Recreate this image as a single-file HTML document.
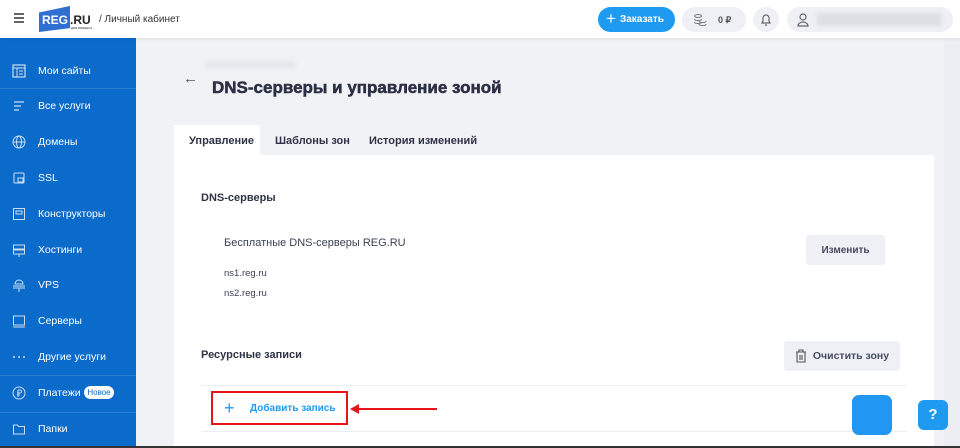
<!DOCTYPE html>
<html><head><meta charset="utf-8"><style>
*{box-sizing:border-box;margin:0;padding:0}
html,body{width:960px;height:448px;overflow:hidden}
body{font-family:"Liberation Sans",sans-serif;background:#f1f2f6;position:relative;color:#2f3347}
.hdr{position:absolute;left:0;top:0;width:960px;height:38px;background:#fff;box-shadow:0 1px 3px rgba(0,0,0,.08);z-index:2}
.side{position:absolute;left:0;top:38px;width:136px;height:410px;background:#0b6bcb;color:#fff;font-size:10.5px}
.it{position:absolute;left:0;width:136px;height:20px;display:flex;align-items:center}
.it svg{position:absolute;left:12px;width:14px;height:14px}
.it span{position:absolute;left:38px}
.dv{position:absolute;left:0;width:136px;height:1px;background:rgba(255,255,255,.12)}
.pill{border-radius:14px;background:#eef0f5;position:absolute;top:7px;height:25px}
.card{position:absolute;left:174px;top:155px;width:760px;height:300px;background:#fff}
.t{position:absolute;font-size:11px;font-weight:bold;top:135px}
.btn{position:absolute;background:#eef0f5;border-radius:3px;font-size:10px;font-weight:bold;color:#464c60;display:flex;align-items:center;justify-content:center}
</style></head><body>
<div class="hdr">
 <div style="position:absolute;left:14px;top:13px;width:10px;height:2px;background:#666;box-shadow:0 4px 0 #666,0 8px 0 #666"></div>
 <div style="position:absolute;left:39px;top:6px;width:31px;height:26px;background:#2f6fd0;clip-path:polygon(0 25%,100% 0,100% 85%,0 100%)"></div>
 <div style="position:absolute;left:42px;top:13px;font-size:12px;font-weight:bold;color:#fff">REG</div>
 <div style="position:absolute;left:70px;top:13px;font-size:12px;font-weight:bold;color:#222">.RU</div>
 <div style="position:absolute;left:71px;top:26px;font-size:3px;color:#222">ДЛЯ БИЗНЕСА</div>
 <div style="position:absolute;left:99px;top:14px;font-size:10px;color:#333">/ Личный кабинет</div>
 <div style="position:absolute;left:598px;top:7px;width:77px;height:25px;border-radius:13px;background:#1e9bf0;color:#fff;font-size:10px;font-weight:bold;display:flex;align-items:center;padding-left:8px"><span style="font-size:17px;font-weight:normal;margin-right:4px;margin-top:-2px">+</span>Заказать</div>
 <div class="pill" style="left:682px;width:64px;font-size:9px;font-weight:bold;color:#555"><svg width="14" height="14" style="position:absolute;left:11px;top:6px"><ellipse cx="5" cy="3" rx="3.5" ry="1.5" fill="none" stroke="#777"/><path d="M1.5 6c0 2 7 2 7 0M1.5 9c0 2 7 2 7 0M6 11c0 2 7 2 7 0M6 8c0 2 7 2 7 0" fill="none" stroke="#777"/></svg><span style="position:absolute;left:36px;top:8px">0 ₽</span></div>
 <div class="pill" style="left:753px;width:26px;border-radius:50%"><svg width="26" height="25"><path d="M9 16h8l-1-2v-3a3 3 0 0 0-6 0v3z M12 18h2" fill="none" stroke="#666" stroke-width="1.2"/></svg></div>
 <div class="pill" style="left:787px;width:166px"><svg width="26" height="25"><circle cx="16" cy="10" r="3" fill="none" stroke="#666" stroke-width="1.2"/><path d="M11 19a5 4 0 0 1 10 0z" fill="none" stroke="#666" stroke-width="1.2"/></svg><div style="position:absolute;left:30px;top:6px;width:124px;height:13px;background:#dcdee4;filter:blur(2px)"></div></div>
</div>
<div class="side">
 <div class="it" style="top:23px"><svg viewBox="0 0 14 14"><rect x="1" y="1" width="12" height="12" fill="none" stroke="#cde" stroke-width="1.2"/><path d="M1 4h12M5 4v9M7 7h4M7 10h4" stroke="#cde"/></svg><span>Мои сайты</span></div>
 <div class="dv" style="top:50px"></div>
 <div class="it" style="top:58px"><svg viewBox="0 0 14 14"><path d="M2 3h10M2 7h7M2 11h5" stroke="#cde" stroke-width="1.2"/></svg><span>Все услуги</span></div>
 <div class="it" style="top:94px"><svg viewBox="0 0 14 14"><circle cx="7" cy="7" r="6" fill="none" stroke="#cde"/><ellipse cx="7" cy="7" rx="2.5" ry="6" fill="none" stroke="#cde"/><path d="M1 7h12" stroke="#cde"/></svg><span>Домены</span></div>
 <div class="it" style="top:130px"><svg viewBox="0 0 14 14"><rect x="2" y="2" width="10" height="10" rx="1" fill="none" stroke="#cde"/><rect x="6" y="7" width="5" height="4" fill="none" stroke="#cde"/></svg><span>SSL</span></div>
 <div class="it" style="top:166px"><svg viewBox="0 0 14 14"><rect x="1.5" y="1.5" width="11" height="11" fill="none" stroke="#cde"/><path d="M4 4h6v3H4z" fill="none" stroke="#cde"/></svg><span>Конструкторы</span></div>
 <div class="it" style="top:202px"><svg viewBox="0 0 14 14"><rect x="1.5" y="2" width="11" height="4" fill="none" stroke="#cde"/><rect x="1.5" y="7" width="11" height="4" fill="none" stroke="#cde"/><path d="M7 11v3" stroke="#cde"/></svg><span>Хостинги</span></div>
 <div class="it" style="top:237px"><svg viewBox="0 0 14 14"><path d="M3 6a3 3 0 0 1 8 0H3zM1 8h12M1 10h12M7 10v4" stroke="#cde" fill="none"/></svg><span>VPS</span></div>
 <div class="it" style="top:273px"><svg viewBox="0 0 14 14"><rect x="1.5" y="2" width="11" height="9" fill="none" stroke="#cde"/><path d="M1 13h12" stroke="#cde"/></svg><span>Серверы</span></div>
 <div class="it" style="top:309px"><svg viewBox="0 0 14 14"><circle cx="2" cy="7" r="1" fill="#cde"/><circle cx="7" cy="7" r="1" fill="#cde"/><circle cx="12" cy="7" r="1" fill="#cde"/></svg><span>Другие услуги</span></div>
 <div class="dv" style="top:337px"></div>
 <div class="it" style="top:345px"><svg viewBox="0 0 14 14"><circle cx="7" cy="7" r="6" fill="none" stroke="#cde"/><path d="M6 4v7M6 4h2a1.5 1.5 0 0 1 0 3H5M5 9h3" stroke="#cde" fill="none"/></svg><span>Платежи</span><div style="position:absolute;left:84px;top:3px;width:30px;height:13px;border-radius:7px;background:#fff;color:#0b6bcb;font-size:8px;text-align:center;line-height:13px">Новое</div></div>
 <div class="dv" style="top:374px"></div>
 <div class="it" style="top:381px"><svg viewBox="0 0 14 14"><path d="M1.5 3h4l1 1.5h6v7.5h-11z" fill="none" stroke="#cde"/></svg><span>Папки</span></div>
</div>
<div style="position:absolute;left:183px;top:70px;font-size:15px;color:#555">←</div>
<div style="position:absolute;left:205px;top:61px;width:90px;height:7px;background:#e4e6ec;filter:blur(2px)"></div>
<div style="position:absolute;left:212px;top:78px;font-size:17px;font-weight:bold;color:#2b3045;-webkit-text-stroke:0.5px #2b3045">DNS-серверы и управление зоной</div>
<div style="position:absolute;left:174px;top:125px;width:86px;height:30px;background:#fff"></div>
<div class="t" style="left:189px">Управление</div>
<div class="t" style="left:275px">Шаблоны зон</div>
<div class="t" style="left:369px">История изменений</div>
<div class="card"></div>
<div style="position:absolute;left:201px;top:192px;font-size:11px;font-weight:bold">DNS-серверы</div>
<div style="position:absolute;left:224px;top:237px;font-size:11px;color:#3a3f55">Бесплатные DNS-серверы REG.RU</div>
<div style="position:absolute;left:224px;top:268px;font-size:9.5px;color:#3a3f55">ns1.reg.ru</div>
<div style="position:absolute;left:224px;top:288px;font-size:9.5px;color:#3a3f55">ns2.reg.ru</div>
<div class="btn" style="left:806px;top:235px;width:79px;height:30px">Изменить</div>
<div style="position:absolute;left:201px;top:349px;font-size:11px;font-weight:bold">Ресурсные записи</div>
<div class="btn" style="left:784px;top:341px;width:116px;height:30px;font-size:10.5px"><svg width="12" height="14" style="margin-right:6px"><path d="M1 3h10M4 3V1h4v2M2 3v10h8V3M5 6v5M7 6v5" fill="none" stroke="#555" stroke-width="1.1"/></svg>Очистить зону</div>
<div style="position:absolute;left:201px;top:385px;width:706px;height:1px;background:#eceef2"></div>
<div style="position:absolute;left:201px;top:431px;width:706px;height:1px;background:#eceef2"></div>
<div style="position:absolute;left:211px;top:391px;width:137px;height:34px;border:2px solid #e8141b"></div>
<div style="position:absolute;left:224px;top:399px;font-size:18px;color:#1e9bf0;line-height:18px">+</div>
<div style="position:absolute;left:250px;top:403px;font-size:10px;font-weight:bold;color:#1e9bf0">Добавить запись</div>
<div style="position:absolute;left:356px;top:408px;width:81px;height:2px;background:#e8141b"></div>
<div style="position:absolute;left:350px;top:404px;width:0;height:0;border-top:5px solid transparent;border-bottom:5px solid transparent;border-right:9px solid #e8141b"></div>
<div style="position:absolute;left:944px;top:38px;width:16px;height:410px;background:#eceef3"></div>
<div style="position:absolute;left:852px;top:395px;width:40px;height:40px;border-radius:7px;background:#2196f3"></div>
<div style="position:absolute;left:918px;top:400px;width:30px;height:30px;border-radius:6px;background:#1e9bf0;color:#fff;font-weight:bold;font-size:15px;text-align:center;line-height:30px">?</div>
<div style="position:absolute;left:0;top:446px;width:960px;height:2px;background:#333"></div>
</body></html>
